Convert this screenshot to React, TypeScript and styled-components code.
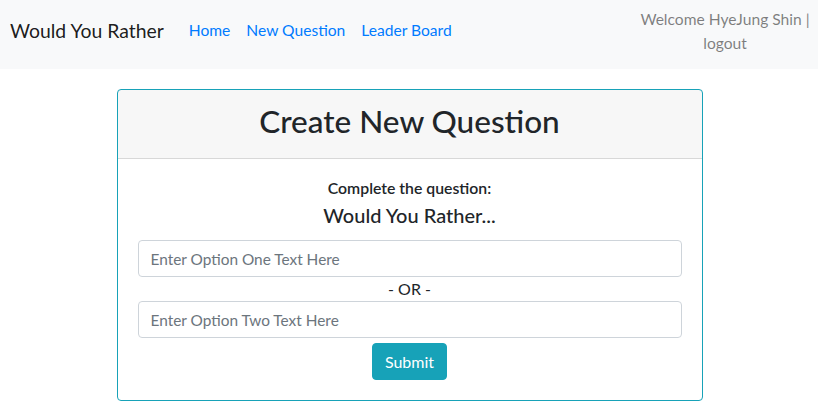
import React from "react";
import styled, { createGlobalStyle } from "styled-components";

const Global = createGlobalStyle`
  html, body { margin: 0; padding: 0; background: #fff; }
  body {
    font-family: Lato, "Open Sans", sans-serif;
    font-size: 16px;
    line-height: 1.5;
    color: #212529;
  }
  * { box-sizing: border-box; }
`;

const NavBar = styled.nav`
  display: flex;
  align-items: center;
  height: 69px;
  padding: 7px 7px 14px 10px;
  background: #f8f9fa;
`;

const Brand = styled.span`
  font-size: 19.4px;
  color: rgba(0, 0, 0, 0.9);
  margin-right: 17px;
  white-space: nowrap;
`;

const NavList = styled.div`
  display: flex;
  flex: 1;
`;

const NavLink = styled.a`
  color: #007bff;
  font-size: 15.6px;
  padding: 0 8px;
  text-decoration: none;
  white-space: nowrap;
`;

const UserInfo = styled.div`
  color: rgba(0, 0, 0, 0.5);
  font-size: 15.6px;
  text-align: center;
  line-height: 24px;
  width: 172px;
`;

const Main = styled.main`
  display: flex;
  justify-content: center;
  padding: 20px 0 0 1px;
`;

const Card = styled.div`
  width: 586px;
  border: 1px solid #17a2b8;
  border-radius: 4px;
  overflow: hidden;
`;

const CardHeader = styled.div`
  background: rgba(0, 0, 0, 0.03);
  border-bottom: 1px solid rgba(0, 0, 0, 0.125);
  height: 69px;
  display: flex;
  align-items: center;
  justify-content: center;
  padding-bottom: 5px;
`;

const Title = styled.h3`
  margin: 0;
  font-size: 31.5px;
  font-weight: 500;
  line-height: 1.2;
`;

const CardBody = styled.div`
  padding: 17px 20px 20px;
  display: flex;
  flex-direction: column;
  align-items: center;
`;

const Prompt = styled.div`
  font-size: 15.8px;
  font-weight: 600;
  line-height: 24px;
`;

const Lead = styled.div`
  font-size: 20px;
  font-weight: 500;
  line-height: 30px;
  margin-bottom: 10px;
`;

const Input = styled.input`
  width: 100%;
  height: 37px;
  padding: 6px 12px;
  font-family: inherit;
  font-size: 15.4px;
  color: #495057;
  border: 1px solid #ced4da;
  border-radius: 4px;
  &::placeholder { color: #6c757d; }
`;

const Divider = styled.div`
  font-size: 16px;
  line-height: 24px;
`;

const Button = styled.button`
  margin-top: 5px;
  height: 37px;
  padding: 0 12px;
  font-family: inherit;
  font-size: 16px;
  color: #fff;
  background: #17a2b8;
  border: 1px solid #17a2b8;
  border-radius: 4px;
`;

export default function App() {
  return (
    <>
      <Global />
      <NavBar>
        <Brand>Would You Rather</Brand>
        <NavList>
          <NavLink href="#">Home</NavLink>
          <NavLink href="#">New Question</NavLink>
          <NavLink href="#">Leader Board</NavLink>
        </NavList>
        <UserInfo>
          Welcome HyeJung Shin |<br />
          logout
        </UserInfo>
      </NavBar>
      <Main>
        <Card>
          <CardHeader>
            <Title>Create New Question</Title>
          </CardHeader>
          <CardBody>
            <Prompt>Complete the question:</Prompt>
            <Lead>Would You Rather...</Lead>
            <Input placeholder="Enter Option One Text Here" />
            <Divider>- OR -</Divider>
            <Input placeholder="Enter Option Two Text Here" />
            <Button>Submit</Button>
          </CardBody>
        </Card>
      </Main>
    </>
  );
}
